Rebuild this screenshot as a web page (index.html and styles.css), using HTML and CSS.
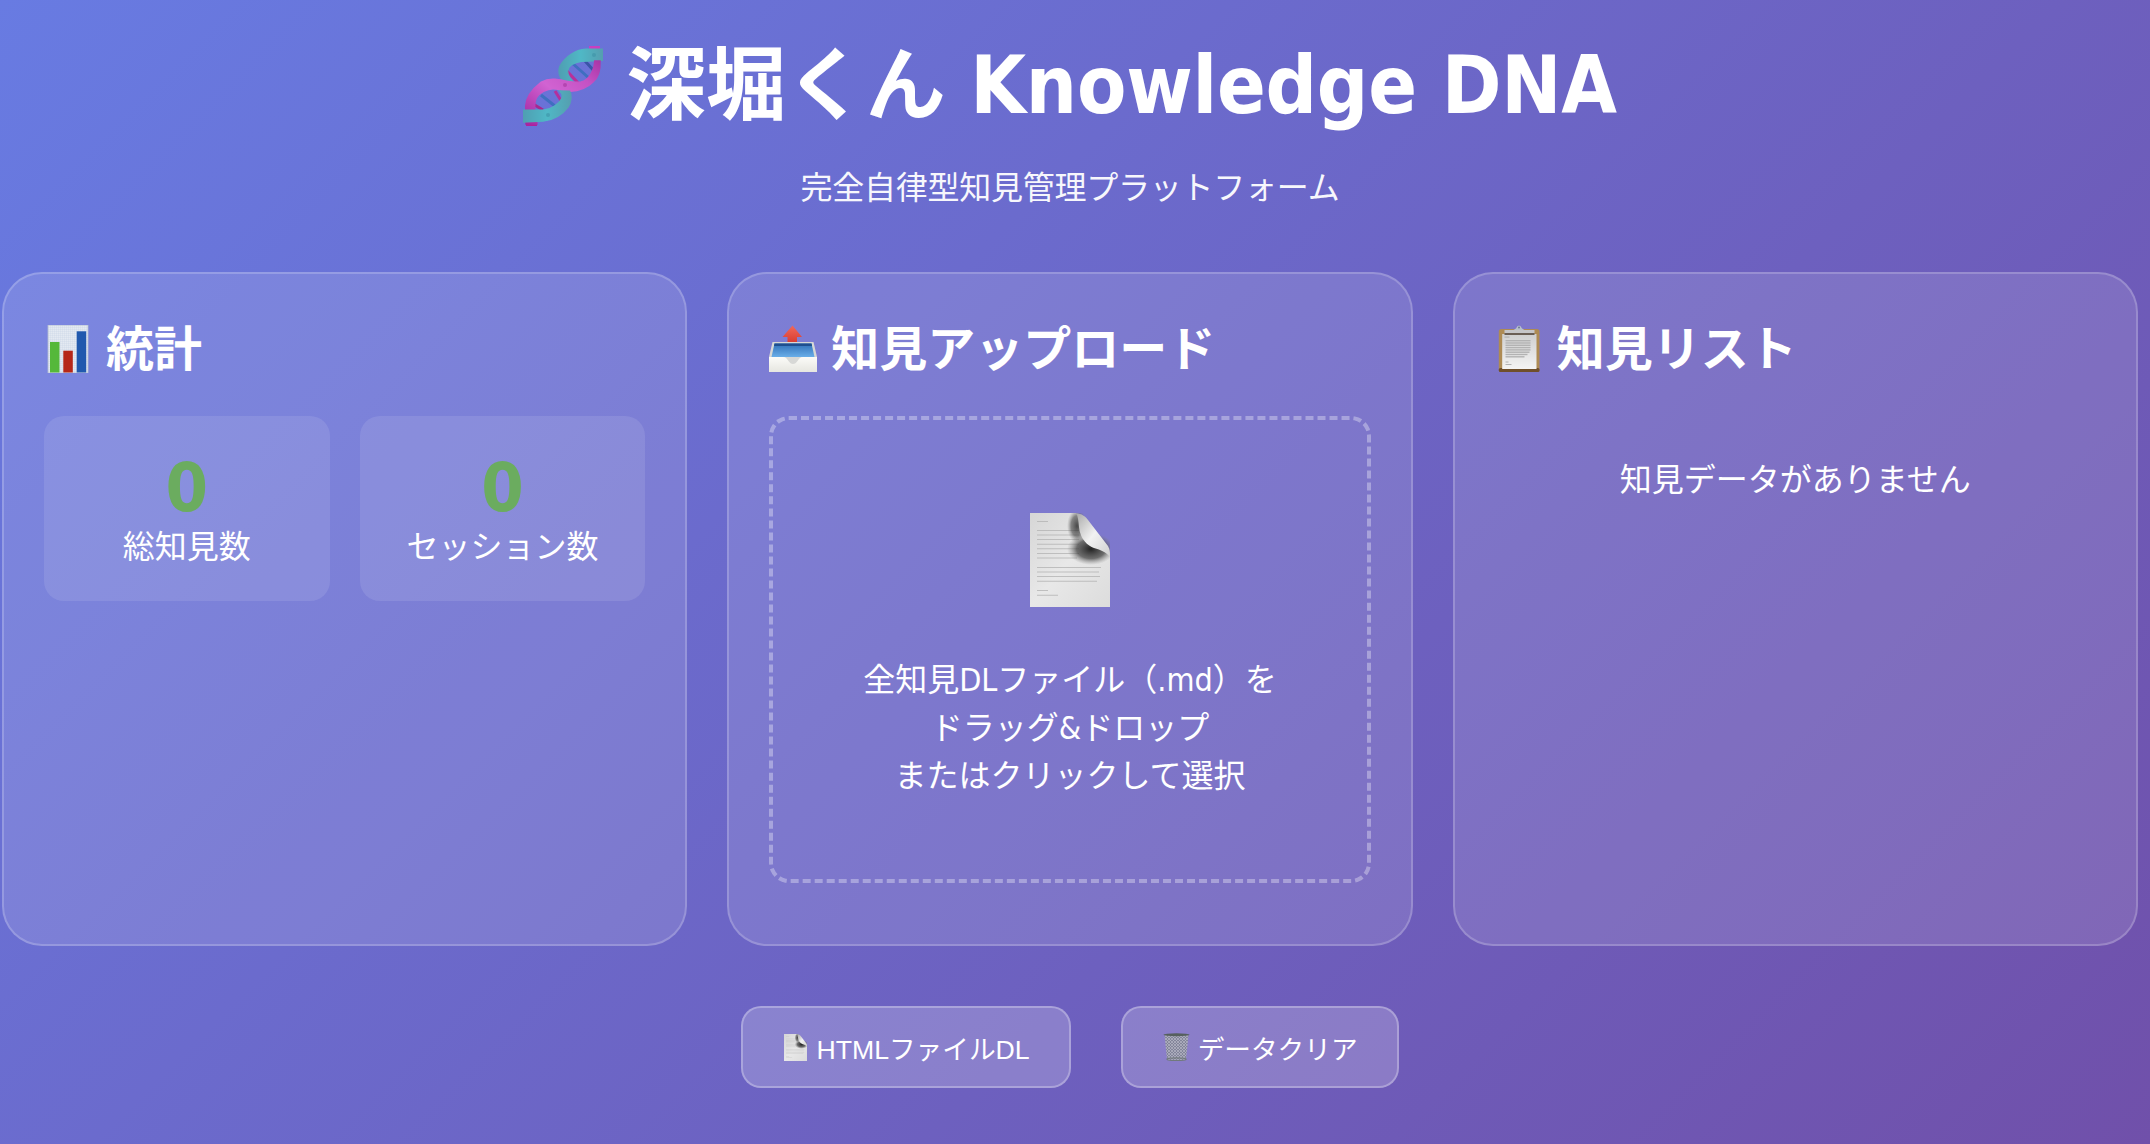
FILE: index.html
```html
<!DOCTYPE html>
<html lang="ja">
<head>
    <meta charset="UTF-8">
    <meta name="viewport" content="width=device-width, initial-scale=1.0">
    <link rel="stylesheet" href="styles.css">
    <title>深堀くん Knowledge DNA</title>
</head>
<body class="main">

<svg class="sprite" xmlns="http://www.w3.org/2000/svg">
    <defs>
        <linearGradient id="pageShade" x1="0" y1="0" x2="1" y2="1">
            <stop offset="0" stop-color="#d6d6d6"/>
            <stop offset="0.5" stop-color="#e8e8e8"/>
            <stop offset="1" stop-color="#dcdcdc"/>
        </linearGradient>
        <radialGradient id="curlShadow" cx="0.5" cy="0.5" r="0.5">
            <stop offset="0" stop-color="#222" stop-opacity="1"/>
            <stop offset="0.6" stop-color="#444" stop-opacity="0.75"/>
            <stop offset="1" stop-color="#888" stop-opacity="0"/>
        </radialGradient>
        <linearGradient id="flap" x1="0" y1="0" x2="1" y2="1">
            <stop offset="0" stop-color="#a8a8a8"/>
            <stop offset="0.5" stop-color="#f2f2f2"/>
            <stop offset="1" stop-color="#cfcfcf"/>
        </linearGradient>
        <linearGradient id="teal" x1="0" y1="0" x2="1" y2="0">
            <stop offset="0" stop-color="#4f9fb2"/>
            <stop offset="0.5" stop-color="#4fb8c6"/>
            <stop offset="1" stop-color="#559fb0"/>
        </linearGradient>
        <linearGradient id="magenta" x1="0" y1="1" x2="1" y2="0">
            <stop offset="0" stop-color="#a3259f"/>
            <stop offset="0.45" stop-color="#d163d2"/>
            <stop offset="0.75" stop-color="#c552c4"/>
            <stop offset="1" stop-color="#a935a6"/>
        </linearGradient>
        <linearGradient id="arrowRed" x1="0" y1="0" x2="0" y2="1">
            <stop offset="0" stop-color="#f0685a"/>
            <stop offset="1" stop-color="#d83c30"/>
        </linearGradient>
        <linearGradient id="trayBlue" x1="0" y1="0" x2="0" y2="1">
            <stop offset="0" stop-color="#2f6fb8"/>
            <stop offset="1" stop-color="#69aee8"/>
        </linearGradient>
        <linearGradient id="trayWhite" x1="0" y1="0" x2="0" y2="1">
            <stop offset="0" stop-color="#fbfbf8"/>
            <stop offset="1" stop-color="#e6e6e0"/>
        </linearGradient>
        <linearGradient id="clipPaper" x1="0" y1="0" x2="0" y2="1">
            <stop offset="0" stop-color="#cfcfcf"/>
            <stop offset="1" stop-color="#f4f4f4"/>
        </linearGradient>
        <pattern id="panelGrid" width="2" height="2" patternUnits="userSpaceOnUse">
            <rect width="2" height="2" fill="#e4eaf2"/>
            <path d="M0 0H2M0 0V2" stroke="#c6d2e2" stroke-width="0.6"/>
        </pattern>
        <pattern id="mesh" width="3" height="3" patternUnits="userSpaceOnUse">
            <rect width="3" height="3" fill="#83859a"/>
            <path d="M0 0L3 3M3 0L0 3" stroke="#b6b8c4" stroke-width="0.7"/>
        </pattern>
    </defs>

    <symbol id="icon-doc" viewBox="0 0 80 94">
        <path d="M0 0H46L80 40V94H0Z" fill="url(#pageShade)"/>
        <g fill="#b4b4b4">
            <rect x="7" y="8" width="11" height="0.8"/>
            <rect x="7" y="17" width="42" height="0.8"/>
            <rect x="7" y="21.600" width="42" height="0.8"/>
            <rect x="7" y="26.200" width="42" height="0.8"/>
            <rect x="7" y="30.800" width="42" height="0.8"/>
            <rect x="7" y="35.400" width="42" height="0.8"/>
            <rect x="7" y="40" width="42" height="0.8"/>
            <rect x="7" y="44.600" width="40" height="0.8"/>
            <rect x="7" y="54" width="64" height="0.8"/>
            <rect x="7" y="58.600" width="62" height="0.8"/>
            <rect x="7" y="63.200" width="63" height="0.8"/>
            <rect x="7" y="67.800" width="60" height="0.8"/>
            <rect x="7" y="77.200" width="11" height="0.8"/>
            <rect x="7" y="81.800" width="21" height="0.8"/>
        </g>
        <ellipse cx="61" cy="36" rx="24" ry="16" fill="url(#curlShadow)"/>
        <ellipse cx="47" cy="13" rx="10" ry="17" fill="url(#curlShadow)" opacity="0.8"/>
        <path d="M46 0C52 1 55 3 58 7L78 33C80 37 80 38 80 44C76 39 71 37 64 35C58 33 50 26 49 14C48.500 8 48 3 46 0Z" fill="url(#flap)"/>
    </symbol>

    <symbol id="icon-dna" viewBox="0 0 80 80">
        <path d="M66 0H77V4H66Z" fill="#c93fc0"/>
        <path d="M3 76H14V80H3Z" fill="#b0209c"/>
        <g stroke-width="3">
            <path d="M48 16L67 33" stroke="#3f6fc0"/>
            <path d="M42 23L57 39" stroke="#b8309a"/>
            <path d="M62 15L72 26" stroke="#3a55a8"/>
            <path d="M18 49L37 64" stroke="#3f6fc0"/>
            <path d="M32 45L42 61" stroke="#b3309e"/>
            <path d="M10 58L20 64" stroke="#a8288e"/>
        </g>
        <path d="M79.300 3.300H63C52 4 42 11 37 20C34.500 26 37 33 42 37L50 36C45 31 43 26 46 21C49 17 56 15 65 15L79.300 14.300Z" fill="url(#teal)" stroke="url(#teal)" stroke-width="1.400"/>
        <path d="M77 15C77.500 24 76 31 70 36C64 42 55 45 47 45.300C40 45 35 42.700 30 42.700C24 42.700 16 47 13.300 52C11.500 56 11.500 62 12 66L14 78H3L2.700 60C3 52 8 44 18.300 36C23 33.500 28 33 32 33.300C40 34 50 37 58 36C66 34 71 25 71.700 15Z" fill="url(#magenta)" stroke="url(#magenta)" stroke-width="1.400"/>
        <path d="M0 64.300H20C28 64 36 58 38.500 53C40 50 39 47 36.700 45L46.700 45.300C49 50 48 57 45 61C39 69 30 74 20 75L0 76Z" fill="url(#teal)" stroke="url(#teal)" stroke-width="1.400"/>
        <circle cx="71" cy="9" r="2" fill="#3e93a6" opacity="0.6"/>
        <circle cx="25" cy="69" r="2" fill="#3e93a6" opacity="0.6"/>
        <circle cx="42" cy="39" r="2" fill="#a5359e" opacity="0.6"/>
    </symbol>

    <symbol id="icon-chart" viewBox="0 0 48 48">
        <rect x="4" y="0" width="40" height="48" fill="url(#panelGrid)"/>
        <path d="M4 0H44V48H4Z" fill="none" stroke="#b5bfd0" stroke-width="0.800"/>
        <rect x="6" y="17" width="9.500" height="30.500" fill="#55b83a"/>
        <rect x="19.300" y="25.700" width="9.500" height="21.800" fill="#b62718"/>
        <rect x="32.700" y="6.300" width="9.500" height="41.200" fill="#2059ae"/>
    </symbol>

    <symbol id="icon-inbox" viewBox="0 0 48 48">
        <path d="M23.500 0.500L33 12H28V18H18.500V12H13.500Z" fill="url(#arrowRed)"/>
        <path d="M3.500 17H44.500L48 32V47H0V32Z" fill="#d7d8d6"/>
        <path d="M5.500 18.500H42.500L45.500 32H2.500Z" fill="url(#trayBlue)"/>
        <path d="M5.500 18.500H42.500L43 21H5Z" fill="#1f4f8f"/>
        <path d="M0 32H14C17 32 18 34 19.500 36C21 38 22 39 24 39C26 39 27 38 28.500 36C30 34 31 32 34 32H48V47H0Z" fill="url(#trayWhite)"/>
    </symbol>

    <symbol id="icon-clipboard" viewBox="0 0 48 48">
        <g transform="translate(1.500 0)">
            <rect x="2.300" y="4" width="40.700" height="43" rx="2.500" fill="#ae8b54"/>
            <rect x="2.300" y="43" width="40.700" height="4" rx="1.500" fill="#6f4f2a"/>
            <rect x="5.700" y="9" width="34.300" height="35" fill="url(#clipPaper)"/>
            <g fill="#b2b2b2">
                <rect x="8" y="11.500" width="5" height="1.200"/>
                <rect x="9" y="15" width="25" height="1.400"/>
                <rect x="9" y="17.300" width="25" height="1.400"/>
                <rect x="9" y="19.600" width="25" height="1.400"/>
                <rect x="9" y="21.900" width="25" height="1.400"/>
                <rect x="9" y="24.200" width="25" height="1.400"/>
                <rect x="9" y="26.500" width="24" height="1.400"/>
                <rect x="9" y="28.800" width="22" height="1.400"/>
                <rect x="9" y="31.100" width="19" height="1.400"/>
                <rect x="9" y="36.500" width="3" height="1"/>
                <rect x="9" y="39" width="6" height="1"/>
            </g>
            <rect x="8" y="5" width="30" height="3.500" fill="#c6c6c8"/>
            <rect x="8" y="8" width="30" height="2" fill="#6b5f55"/>
            <path d="M17 5C19 4 20 3.500 20.500 1.800C21 0.300 24 0.300 24.500 1.800C25 3.500 26 4 28 5Z" fill="#b8c0cc"/>
            <circle cx="22.500" cy="2.600" r="1" fill="#6c7a92"/>
        </g>
    </symbol>

    <symbol id="icon-trash" viewBox="0 0 27 28">
        <path d="M1.500 2H25.500L23 26.500C20 28 7 28 4 26.500Z" fill="url(#mesh)"/>
        <ellipse cx="13.500" cy="1.800" rx="13" ry="1.500" fill="#56605e"/>
        <ellipse cx="13.500" cy="26.200" rx="9.600" ry="1.300" fill="none" stroke="#71797c" stroke-width="1.200"/>
    </symbol>
</svg>

<div class="page">
    <header class="header">
        <h1 class="title">
            <svg class="title-icon"><use href="#icon-dna"/></svg>
            <span>深堀くん Knowledge DNA</span>
        </h1>
        <p class="subtitle">完全自律型知見管理プラットフォーム</p>
    </header>

    <div class="cards">
        <section class="card">
            <h2 class="card-title">
                <svg class="card-icon"><use href="#icon-chart"/></svg>
                <span>統計</span>
            </h2>
            <div class="stats">
                <div class="stat">
                    <div class="stat-number">0</div>
                    <div class="stat-label">総知見数</div>
                </div>
                <div class="stat">
                    <div class="stat-number">0</div>
                    <div class="stat-label">セッション数</div>
                </div>
            </div>
        </section>

        <section class="card">
            <h2 class="card-title">
                <svg class="card-icon"><use href="#icon-inbox"/></svg>
                <span>知見アップロード</span>
            </h2>
            <div class="dropzone">
                <div class="drop-icon"><svg class="doc-icon"><use href="#icon-doc"/></svg></div>
                <div class="drop-text">全知見DLファイル（.md）を<br>ドラッグ&amp;ドロップ<br>またはクリックして選択</div>
            </div>
        </section>

        <section class="card">
            <h2 class="card-title">
                <svg class="card-icon"><use href="#icon-clipboard"/></svg>
                <span>知見リスト</span>
            </h2>
            <div class="empty">知見データがありません</div>
        </section>
    </div>

    <div class="actions">
        <button class="btn">
            <svg class="btn-doc"><use href="#icon-doc"/></svg>
            <span>HTMLファイルDL</span>
        </button>
        <button class="btn">
            <svg class="btn-trash"><use href="#icon-trash"/></svg>
            <span>データクリア</span>
        </button>
    </div>
</div>

</body>
</html>
```

FILE: styles.css
```css
html {
    background-color: #7050aa;
}

.main {
    margin: 0;
    min-height: 1144px;
    background: linear-gradient(135deg, #687be2 0%, #7050aa 100%);
    color: #fff;
    font-family: "DejaVu Sans Condensed", "Noto Sans CJK JP", sans-serif;
    font-size: 32px;
    line-height: 48px;
}

.sprite {
    display: block;
    width: 0;
    height: 0;
}

.page {
    width: 2136px;
    margin-left: 2px;
    padding-top: 40px;
}

.header {
    text-align: center;
    margin-bottom: 60px;
}

.title {
    display: flex;
    justify-content: center;
    align-items: center;
    gap: 23px;
    margin: 0 0 32px;
    font-size: 80px;
    line-height: 92px;
    font-weight: 700;
    letter-spacing: -0.2px;
}

.title-icon {
    width: 80px;
    height: 80px;
}

.subtitle {
    margin: 0;
    opacity: 0.95;
    letter-spacing: -0.25px;
}

.cards {
    display: grid;
    grid-template-columns: repeat(3, 1fr);
    gap: 40px;
}

.card {
    padding: 40px;
    border: 2px solid rgba(255, 255, 255, 0.2);
    border-radius: 40px;
    background-color: rgba(255, 255, 255, 0.12);
}

.card-title {
    display: flex;
    align-items: center;
    gap: 14px;
    height: 70px;
    margin: 0 0 32px;
    font-size: 48px;
    line-height: 62px;
    font-weight: 700;
}

.card-icon {
    width: 48px;
    height: 48px;
}

.stats {
    display: grid;
    grid-template-columns: 1fr 1fr;
    gap: 30px;
}

.stat {
    padding: 30px 10px;
    border-radius: 20px;
    background-color: rgba(255, 255, 255, 0.1);
    text-align: center;
}

.stat-number {
    height: 77px;
    font-size: 68px;
    line-height: 83px;
    font-weight: 700;
    color: #6bac5f;
}

.dropzone {
    margin-bottom: 21px;
    padding: 80px 40px;
    border: 4px dashed rgba(255, 255, 255, 0.33);
    border-radius: 20px;
    text-align: center;
}

.drop-icon {
    display: flex;
    justify-content: center;
    align-items: center;
    height: 120px;
    margin-bottom: 36px;
}

.doc-icon {
    width: 80px;
    height: 94px;
}

.drop-text {
    margin-bottom: -1px;
}

.empty {
    padding-top: 40px;
    text-align: center;
}

.actions {
    display: flex;
    justify-content: center;
    gap: 50px;
    margin-top: 60px;
}

.btn {
    display: flex;
    align-items: center;
    gap: 8px;
    height: 82px;
    padding: 0 39.5px;
    border: 2px solid rgba(255, 255, 255, 0.28);
    border-radius: 20px;
    background-color: rgba(255, 255, 255, 0.2);
    color: #fff;
    font-family: "Liberation Sans", "Noto Sans CJK JP", sans-serif;
    font-size: 26.67px;
    cursor: pointer;
}

.btn-doc {
    width: 23px;
    height: 27px;
    margin-left: 2px;
    margin-right: 1px;
}

.btn-trash {
    width: 27px;
    height: 28px;
}
```
